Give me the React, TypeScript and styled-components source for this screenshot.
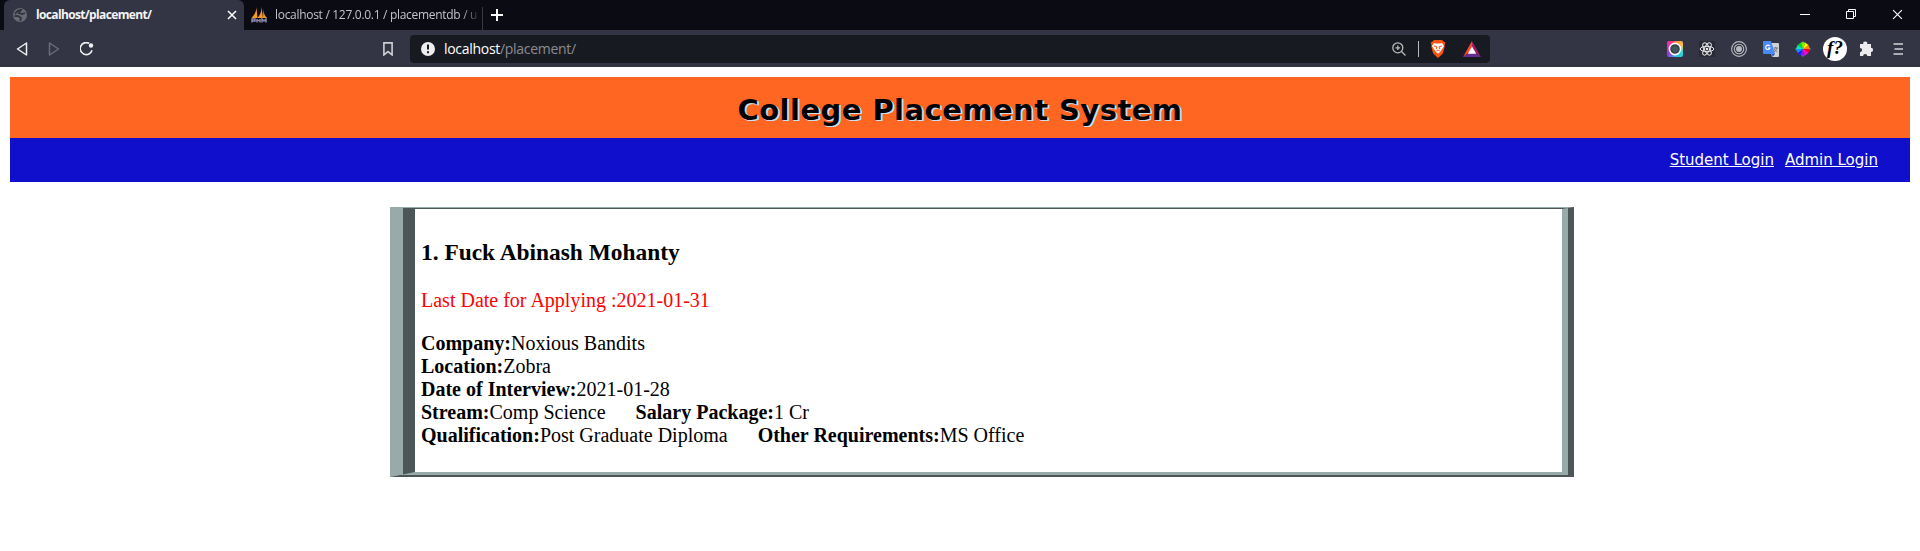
import React from 'react';
import styled, { createGlobalStyle } from 'styled-components';

const GlobalStyle = createGlobalStyle`
  * { box-sizing: border-box; }
  html, body { margin: 0; padding: 0; background: #fff; }
  body { overflow: hidden; }
  svg { display: block; flex: none; }
`;

const uiFont = `'Open Sans', 'Noto Sans', sans-serif`;

const TabStrip = styled.div`
  height: 30px;
  background: #0b0b13;
  display: flex;
  align-items: stretch;
  padding-left: 4px;
  font: 12px/30px ${uiFont};
`;
const Tab = styled.div<{ $active?: boolean }>`
  width: ${p => (p.$active ? 240 : 238)}px;
  padding: ${p => (p.$active ? '0 7px 0 9px' : '0 4px 0 7px')};
  display: flex;
  align-items: center;
  color: ${p => (p.$active ? '#f4f4f6' : '#c3c4ca')};
  background: ${p => (p.$active ? '#333544' : 'transparent')};
  border-radius: ${p => (p.$active ? '6px 6px 0 0' : '0')};
`;
const TabTitle = styled.span<{ $bold?: boolean; $spacing: number }>`
  margin-left: ${p => (p.$bold ? 9 : 7)}px;
  flex: 1;
  min-width: 0;
  overflow: hidden;
  white-space: nowrap;
  font-weight: ${p => (p.$bold ? 700 : 400)};
  letter-spacing: ${p => p.$spacing}px;
  ${p => (p.$bold ? '' : 'mask-image: linear-gradient(to right, #000 186px, transparent 206px);')}
`;
const NewTab = styled.div`
  border-left: 1px solid #3a3a3e;
  margin-top: 7px;
  padding: 2px 0 0 8px;
`;
const WindowButtons = styled.div`
  margin-left: auto;
  padding: 9px 17px 0 0;
  display: flex;
  gap: 36px;
`;
const Toolbar = styled.div`
  height: 37px;
  background: #333544;
  display: flex;
  align-items: center;
  padding: 0 17px 0 16px;
`;
const NavButtons = styled.div`
  width: 367px;
  display: flex;
  align-items: center;
  gap: 20px;
`;
const Address = styled.div`
  width: 1080px;
  height: 28px;
  margin: 0 auto 0 17px;
  padding: 0 9px 0 11px;
  border-radius: 4px;
  background: #181a21;
  display: flex;
  align-items: center;
  font: 14px/28px ${uiFont};
  color: #8b8c90;
`;
const Url = styled.span`
  margin-left: 9px;
  flex: 1;
  letter-spacing: -0.3px;
`;
const Host = styled.span`
  color: #fff;
`;
const Divider = styled.i`
  width: 1px;
  height: 16px;
  background: #bbb;
  margin: 0 11px 0 12px;
`;
const Shields = styled.span`
  margin-right: 17px;
`;
const Extensions = styled.div`
  display: flex;
  align-items: center;
  gap: 16px;
`;
const Badge = styled.span`
  width: 24px;
  height: 24px;
  margin: 0 -4px;
  border-radius: 50%;
  background: #fff;
  color: #000;
  text-align: center;
  font: italic bold 19px/22px 'Liberation Serif', serif;
`;
const MenuButton = styled.span`
  margin-left: 3px;
`;
const Page = styled.main`
  padding: 10px 10px 0;
`;
const Banner = styled.header`
  height: 61px;
  background: #ff6622;
  text-align: center;
`;
const Title = styled.h1`
  margin: 0;
  font: bold 29px/66px 'DejaVu Sans', Verdana, sans-serif;
  letter-spacing: 0.45px;
  color: #000;
  text-shadow: 1px 1px 0 #cde, 2px 1px 0 #cde;
`;
const LoginBar = styled.nav`
  height: 44px;
  background: #1010cc;
  display: flex;
  justify-content: flex-end;
  gap: 11px;
  padding-right: 32px;
`;
const LoginLink = styled.a`
  color: #fff;
  font: 15px/45px 'DejaVu Sans', Verdana, sans-serif;
  text-decoration: underline;
`;
const Notice = styled.section`
  width: 1184px;
  height: 270px;
  margin: 25px 0 0 380px;
  padding: 0 6px;
  border: ridge #9aa;
  border-width: 2px 12px 5px 25px;
  font: 20px/23px 'Liberation Serif', 'Times New Roman', serif;
  color: #000;
  white-space: pre;
`;
const NoticeTitle = styled.h3`
  margin: 30px 0 0;
  font-size: 23.4px;
  line-height: 27px;
`;
const Deadline = styled.p`
  margin: 23px 0 20px;
  color: #f00;
`;
const DetailRow = styled.div`
  display: flex;
  gap: 30px;
`;

const Detail = ({ label, value }: { label: string; value: string }) => (
  <span><b>{label}:</b>{value}</span>
);

const Globe = () => (
  <svg width="14" height="14" viewBox="0 0 14 14">
    <circle cx="7" cy="7" r="7" fill="#686b72" />
    <path d="M2 6c2-3 3-4 6-4l-2 3 3 1 3-1M1.5 8l4 .2L8 10l-1 3" fill="none" stroke="#30323f" strokeWidth="1.8" />
  </svg>
);
const Sails = () => (
  <svg width="17" height="16" viewBox="0 0 17 16">
    <path d="M5.500 0C5.500 4 3.500 8 .5 11h6zM10.500 0c0 5-1.500 8-4 11h5.500zM12.500 1c0 5 1 7.500 3.500 10h-4z" fill="#f39a28" />
    <path d="M1 15.500v-3.500h3v2H1M6 15.500V12M6 13.500h3m0-1.500v3.500m2 0V12l2 2 2-2v3.500" fill="none" stroke="#8a89ad" strokeWidth="1.500" />
  </svg>
);
const Cross = ({ size, width }: { size: number; width: number }) => (
  <svg width={size} height={size} viewBox="0 0 10 10" stroke="#fff" strokeWidth={width}>
    <path d="M1 1l8 8M9 1L1 9" />
  </svg>
);
const Plus = () => (
  <svg width="12" height="12" viewBox="0 0 12 12" stroke="#fff" strokeWidth="2"><path d="M6 0v12M0 6h12" /></svg>
);
const Arrow = ({ forward }: { forward?: boolean }) => (
  <svg width="12" height="14" viewBox="0 0 12 14" fill="none" strokeLinejoin="round" strokeWidth="1.5" stroke={forward ? '#6b6d7a' : '#f0f0f2'}>
    <path d={forward ? 'M1.5 1v12L10.5 7z' : 'M10.5 1v12L1.5 7z'} />
  </svg>
);
const Reload = () => (
  <svg width="14" height="14" viewBox="0 0 14 14">
    <path d="M9.200 1.400A6 6 0 1 0 12 8.200" fill="none" stroke="#f0f0f2" strokeWidth="1.6" />
    <circle cx="11" cy="3.5" r="2.2" fill="#f0f0f2" />
  </svg>
);
const Bookmark = () => (
  <svg width="10" height="14" viewBox="0 0 10 14" fill="none" stroke="#cfd0d4" strokeWidth="1.6"><path d="M.9.9h8.2v12L5 9.6.9 12.9z" /></svg>
);
const SiteInfo = () => (
  <svg width="14" height="14" viewBox="0 0 14 14">
    <circle cx="7" cy="7" r="7" fill="#eee" />
    <path d="M7 2.5v5M7 9.2v2" stroke="#181a21" strokeWidth="2" />
  </svg>
);
const ZoomIn = () => (
  <svg width="14" height="14" viewBox="0 0 14 14" fill="none" stroke="#bbb" strokeWidth="1.3">
    <circle cx="5.8" cy="5.8" r="5" /><path d="M9.5 9.5l4 4M3.5 5.8h4.6M5.8 3.5v4.6" />
  </svg>
);
const Lion = () => (
  <svg width="16" height="18" viewBox="0 0 16 18">
    <path d="M4 0h8l1.500 1.500 1.800 1-.8 3 .3 1-2 7L8 18l-4.800-4.500-2-7 .3-1-.8-3 1.800-1z" fill="#fb5411" />
    <path d="M4 3l2 .6h4l2-.6 2 3-2.500 4L10 12l-2 1.700L6 12 4.500 10 2 6z" fill="#fff" />
    <path d="M4 6l3 .8-.8 2.400M12 6l-3 .8.800 2.400M6.400 11L8 10l1.600 1" fill="none" stroke="#fb5411" />
  </svg>
);
const Triangle = () => (
  <svg width="18" height="16" viewBox="0 0 18 16">
    <path d="M9 0L0 16l9-7z" fill="#ff4724" />
    <path d="M9 0l9 16-9-7z" fill="#9e1f63" />
    <path d="M0 16h18L9 9z" fill="#662d91" />
    <path d="M9 5.500L4.800 12.800h8.400z" fill="#fff" />
  </svg>
);
const ColorTile = styled.span`
  width: 16px;
  height: 16px;
  border-radius: 2px;
  background: conic-gradient(from 20deg, #ff9c32, #ffbd52 12%, #2fdac8 25%, #27bfe8 42%, #a52ee8 60%, #f426b8 78%, #ff4569 90%, #ff9c32);
`;
const Lens = () => (
  <svg width="16" height="16" viewBox="0 0 16 16">
    <circle cx="8" cy="8" r="5.600" fill="#34434c" stroke="#fff" strokeWidth="1.600" /><circle cx="8" cy="8" r="3" fill="#46545c" />
  </svg>
);
const Atom = () => (
  <svg width="16" height="16" viewBox="0 0 16 16" fill="none" stroke="#e8e8ea">
    <rect width="16" height="16" fill="#282a36" stroke="none" />
    {[0, 60, 120].map(a => <ellipse key={a} cx="8" cy="8" rx="6.800" ry="2.700" transform={`rotate(${a} 8 8)`} />)}
    <circle cx="8" cy="8" r="1.300" fill="#e8e8ea" stroke="none" />
  </svg>
);
const Target = () => (
  <svg width="16" height="16" viewBox="0 0 16 16" fill="none" stroke="#b9bac0" strokeWidth="1.100">
    <circle cx="8" cy="8" r="7.400" /><circle cx="8" cy="8" r="4.700" /><circle cx="8" cy="8" r="2.400" fill="#b9bac0" />
  </svg>
);
const Translate = () => (
  <svg width="16" height="16" viewBox="0 0 16 16">
    <path d="M6 2h9q1 0 1 1v12q0 1-1 1H9z" fill="#cfd1d4" />
    <path d="M1 0h7l4 13H1q-1 0-1-1V1q0-1 1-1z" fill="#4a8af4" />
    <path d="M9 13h3l-2.500 3z" fill="#2a56b8" />
    <path d="M6.700 5a2.200 2.200 0 1 0 .3 2H5" fill="none" stroke="#fff" strokeWidth="1.100" />
    <path d="M10.500 7h4.500M12.700 6v1M14 7c-.5 2-1.500 3-3 4m.3-3c.7 1.500 1.600 2.300 3 3" fill="none" stroke="#70757c" />
  </svg>
);
const wheelColors = ['#f00028', '#ff8a00', '#fff000', '#80f000', '#00d820', '#00e8c8', '#0098ff', '#2020ff', '#9010ff', '#ff00d0'];
const Wheel = () => (
  <svg width="16" height="16" viewBox="-8 -8 16 16">
    <path d="M0-8L8 0 0 8-8 0z" fill="#777983" />
    {wheelColors.map((c, i) => <path key={c} d="M0 0L0-6.800L4-5.500z" fill={c} transform={`rotate(${90 - i * 36})`} />)}
  </svg>
);
const Puzzle = () => (
  <svg width="15" height="15" viewBox="0 0 15 15" fill="#ececee">
    <path d="M1 3h3.300a2 2 0 1 1 3.900 0H12v3.800a2 2 0 1 1 0 4.200v4H8.300a2.100 2.100 0 1 0-4.200 0H1v-3.800a2.100 2.100 0 1 0 0-4.200z" />
  </svg>
);
const Menu = () => (
  <svg width="10" height="12" viewBox="0 0 10 12" stroke="#d4d4d8" strokeWidth="1.600"><path d="M.5 1H10M1.500 6H10M.5 11H10" /></svg>
);

export default function App() {
  return (
    <>
      <GlobalStyle />
      <TabStrip>
        <Tab $active>
          <Globe /><TabTitle $bold $spacing={-0.65}>localhost/placement/</TabTitle><Cross size={10} width={1.5} />
        </Tab>
        <Tab>
          <Sails /><TabTitle $spacing={-0.3}>localhost / 127.0.0.1 / placementdb / u</TabTitle>
        </Tab>
        <NewTab><Plus /></NewTab>
        <WindowButtons>
          <svg width="10" height="10" stroke="#fff"><path d="M0 5.500h10" /></svg>
          <svg width="10" height="10" stroke="#fff" fill="none"><path d="M.5 2.500h7v7h-7zM2.500 2.500v-2h7v7h-2" /></svg>
          <Cross size={11} width={1} />
        </WindowButtons>
      </TabStrip>
      <Toolbar>
        <NavButtons><Arrow /><Arrow forward /><Reload /></NavButtons>
        <Bookmark />
        <Address>
          <SiteInfo />
          <Url><Host>localhost</Host>/placement/</Url>
          <ZoomIn /><Divider /><Shields><Lion /></Shields><Triangle />
        </Address>
        <Extensions>
          <ColorTile><Lens /></ColorTile>
          <Atom /><Target /><Translate /><Wheel />
          <Badge>f?</Badge>
          <Puzzle />
          <MenuButton><Menu /></MenuButton>
        </Extensions>
      </Toolbar>
      <Page>
        <Banner><Title>College Placement System</Title></Banner>
        <LoginBar><LoginLink>Student Login</LoginLink><LoginLink>Admin Login</LoginLink></LoginBar>
        <Notice>
          <NoticeTitle>1. Fuck Abinash Mohanty</NoticeTitle>
          <Deadline>Last Date for Applying :2021-01-31</Deadline>
          <DetailRow><Detail label="Company" value="Noxious Bandits" /></DetailRow>
          <DetailRow><Detail label="Location" value="Zobra" /></DetailRow>
          <DetailRow><Detail label="Date of Interview" value="2021-01-28" /></DetailRow>
          <DetailRow><Detail label="Stream" value="Comp Science" /><Detail label="Salary Package" value="1 Cr" /></DetailRow>
          <DetailRow><Detail label="Qualification" value="Post Graduate Diploma" /><Detail label="Other Requirements" value="MS Office" /></DetailRow>
        </Notice>
      </Page>
    </>
  );
}
